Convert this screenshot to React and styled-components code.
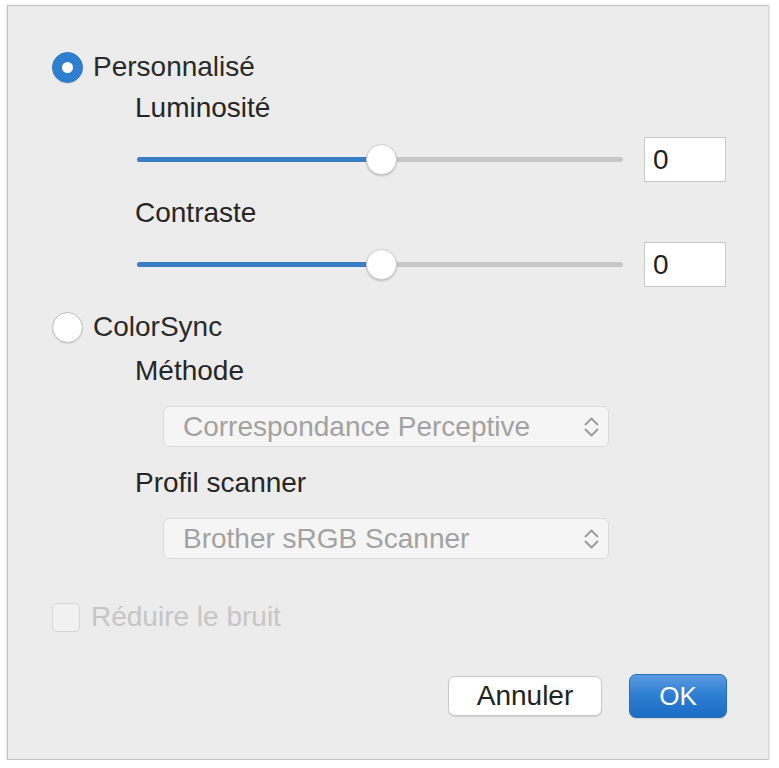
import React, { useState } from 'react'
import styled, { createGlobalStyle } from 'styled-components'

const GlobalStyle = createGlobalStyle`
    html, body {
        margin: 0;
        padding: 0;
        background: #ffffff;
    }
    body {
        font-family: "Liberation Sans", Arial, sans-serif;
        color: #262626;
    }
    * {
        box-sizing: border-box;
    }
`;

function Chevrons() {
    return (
        <svg width="17" height="22" viewBox="0 0 17 22" fill="none">
            <path d="M2.5 8.5 L8.5 2.5 L14.5 8.5" stroke="#9a9a9a" strokeWidth="1.8" strokeLinecap="round" strokeLinejoin="round" />
            <path d="M2.5 13.5 L8.5 19.5 L14.5 13.5" stroke="#9a9a9a" strokeWidth="1.8" strokeLinecap="round" strokeLinejoin="round" />
        </svg>
    )
}

function Slider({ percent, value }) {
    return (
        <SliderRowStyled>
            <div className="track">
                <div className="fill" style={{ width: `${percent}%` }} />
                <div className="thumb" style={{ left: `${percent}%` }} />
            </div>
            <NumberBox>{value}</NumberBox>
        </SliderRowStyled>
    )
}

function App() {
    const [mode, setMode] = useState('custom')
    return (
        <>
            <GlobalStyle />
            <Panel>
                <RadioRow onClick={() => setMode('custom')}>
                    <Radio $checked={mode === 'custom'} />
                    <span>Personnalisé</span>
                </RadioRow>
                <Label $top={9}>Luminosité</Label>
                <Slider percent={50.4} value="0" />
                <Label $top={15}>Contraste</Label>
                <Slider percent={50.4} value="0" />

                <RadioRow $top={24} onClick={() => setMode('colorsync')}>
                    <Radio $checked={mode === 'colorsync'} />
                    <span>ColorSync</span>
                </RadioRow>
                <Label $top={12}>Méthode</Label>
                <Popup>
                    <span>Correspondance Perceptive</span>
                    <Chevrons />
                </Popup>
                <Label $top={20}>Profil scanner</Label>
                <Popup>
                    <span>Brother sRGB Scanner</span>
                    <Chevrons />
                </Popup>

                <CheckRow>
                    <div className="box" />
                    <span>Réduire le bruit</span>
                </CheckRow>

                <ButtonBar>
                    <Button>Annuler</Button>
                    <Button $primary>OK</Button>
                </ButtonBar>
            </Panel>
        </>
    )
}

const Panel = styled.div`
    margin: 5px 0 0 7px;
    width: 762px;
    height: 755px;
    background: #ececec;
    border: 1px solid #c2c2c2;
    border-right-color: #d6d6d6;
    box-shadow: 0 1px 3px rgba(0, 0, 0, 0.18);
    padding: 45px 41px 0 44px;
    display: flex;
    flex-direction: column;
`;

const RadioRow = styled.div`
    display: flex;
    align-items: center;
    gap: 10px;
    height: 32px;
    margin-top: ${p => p.$top || 0}px;
    font-size: 28px;
    line-height: 32px;
    color: #2a2a2a;
    cursor: default;
`;

const Radio = styled.div`
    width: 31px;
    height: 31px;
    border-radius: 50%;
    flex-shrink: 0;
    position: relative;
    background: ${p => p.$checked ? '#2f7fd0' : '#ffffff'};
    border: 1px solid ${p => p.$checked ? '#2b76c4' : '#bcbcbc'};
    box-shadow: 0 1px 1px rgba(0, 0, 0, 0.08);
    &::after {
        content: '';
        display: ${p => p.$checked ? 'block' : 'none'};
        position: absolute;
        left: 50%;
        top: 50%;
        width: 11px;
        height: 11px;
        margin: -5.5px 0 0 -5.5px;
        border-radius: 50%;
        background: #ffffff;
    }
`;

const Label = styled.div`
    margin: ${p => p.$top}px 0 0 83px;
    font-size: 28px;
    line-height: 32px;
    height: 32px;
    color: #262626;
`;

const SliderRowStyled = styled.div`
    display: flex;
    align-items: center;
    margin: 13px 0 0 85px;
    height: 45px;
    .track {
        position: relative;
        width: 486px;
        height: 5px;
        border-radius: 3px;
        background: #c7c7c7;
    }
    .fill {
        height: 100%;
        border-radius: 3px;
        background: #3a7ec6;
    }
    .thumb {
        position: absolute;
        top: 50%;
        width: 31px;
        height: 31px;
        margin: -15.5px 0 0 -15.5px;
        border-radius: 50%;
        background: #ffffff;
        border: 1px solid #cfcfcf;
        box-shadow: 0 1px 2px rgba(0, 0, 0, 0.2);
    }
`;

const NumberBox = styled.div`
    margin-left: 21px;
    width: 82px;
    height: 45px;
    background: #ffffff;
    border: 1px solid #c9c9c9;
    font-size: 28px;
    line-height: 43px;
    padding-left: 8px;
    color: #1f1f1f;
`;

const Popup = styled.div`
    margin: 19px 0 0 111px;
    width: 446px;
    height: 41px;
    background: #f5f5f5;
    border: 1px solid #dadada;
    border-radius: 6px;
    display: flex;
    align-items: center;
    justify-content: space-between;
    padding: 0 8px 0 19px;
    font-size: 28px;
    color: #a2a2a2;
`;

const CheckRow = styled.div`
    display: flex;
    align-items: center;
    gap: 11px;
    margin-top: 43px;
    height: 30px;
    font-size: 28px;
    color: #c6c6c6;
    .box {
        width: 28px;
        height: 29px;
        border: 1px solid #d6d6d6;
        border-radius: 5px;
        background: #f1f1f1;
    }
`;

const ButtonBar = styled.div`
    display: flex;
    justify-content: flex-end;
    align-items: center;
    gap: 27px;
    margin-top: 42px;
    height: 44px;
`;

const Button = styled.button`
    font-family: "Liberation Sans", Arial, sans-serif;
    font-size: ${p => p.$primary ? '26px' : '28px'};
    height: ${p => p.$primary ? '44px' : '40px'};
    width: ${p => p.$primary ? '98px' : '154px'};
    border-radius: 7px;
    padding: 0;
    color: ${p => p.$primary ? '#ffffff' : '#222222'};
    background: ${p => p.$primary
        ? 'linear-gradient(180deg, #5b9be0 0%, #2f80d4 45%, #1b6cc4 100%)'
        : '#ffffff'};
    border: 1px solid ${p => p.$primary ? '#2a6fba' : '#c8c8c8'};
    box-shadow: 0 1px 1px rgba(0, 0, 0, 0.12);
    cursor: default;
`;

export default App
